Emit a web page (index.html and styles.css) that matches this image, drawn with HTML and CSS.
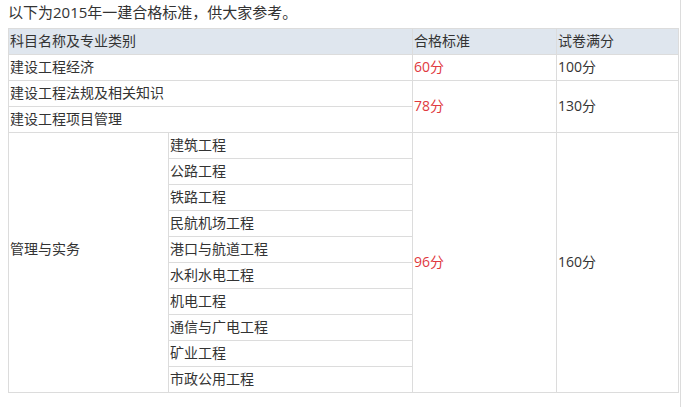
FILE: index.html
```html
<!DOCTYPE html>
<html lang="zh-CN">
<head>
<meta charset="utf-8">
<link rel="stylesheet" href="styles.css">
</head>
<body>
<div class="page">
  <p class="intro">以下为2015年一建合格标准，供大家参考。</p>
  <table class="grid">
    <colgroup>
      <col class="c1"><col class="c2"><col class="c3"><col class="c4">
    </colgroup>
    <thead>
      <tr><th colspan="2">科目名称及专业类别</th><th>合格标准</th><th>试卷满分</th></tr>
    </thead>
    <tbody>
      <tr><td colspan="2">建设工程经济</td><td class="red">60分</td><td>100分</td></tr>
      <tr><td colspan="2">建设工程法规及相关知识</td><td class="red" rowspan="2">78分</td><td rowspan="2">130分</td></tr>
      <tr><td colspan="2">建设工程项目管理</td></tr>
      <tr><td rowspan="10" class="mgmt">管理与实务</td><td>建筑工程</td><td class="red" rowspan="10">96分</td><td rowspan="10">160分</td></tr>
      <tr><td>公路工程</td></tr>
      <tr><td>铁路工程</td></tr>
      <tr><td>民航机场工程</td></tr>
      <tr><td>港口与航道工程</td></tr>
      <tr><td>水利水电工程</td></tr>
      <tr><td>机电工程</td></tr>
      <tr><td>通信与广电工程</td></tr>
      <tr><td>矿业工程</td></tr>
      <tr><td>市政公用工程</td></tr>
    </tbody>
  </table>
</div>
</body>
</html>
```
FILE: styles.css
```css
html, body {
  margin: 0;
  padding: 0;
  background: #fff;
}
body {
  font-family: "Open Sans", "Noto Sans CJK SC", sans-serif;
  font-size: 14px;
  color: #333;
}
.page {
  box-sizing: border-box;
  width: 681px;
  height: 407px;
  padding-left: 8px;
  border-right: 1px solid #dcdcdc;
}
.intro {
  margin: 0 0 2px 0;
  font-size: 15px;
  line-height: 24px;
  height: 26px;
}
.grid {
  border-collapse: collapse;
  border: 1px solid #dcdcdc;
  table-layout: fixed;
  width: 670px;
}
.c1 { width: 160px; }
.c2 { width: 244px; }
.c3 { width: 144px; }
.c4 { width: 122px; }
.grid th, .grid td {
  border: 1px solid #dcdcdc;
  padding: 0 0 2px 1px;
  height: 23px;
  line-height: 20px;
  font-weight: normal;
  text-align: left;
  vertical-align: middle;
  white-space: nowrap;
}
.grid th {
  background: #dfe6ee;
}
.red {
  color: #e0393e;
}
.grid td.mgmt {
  padding-bottom: 28px;
}
```
